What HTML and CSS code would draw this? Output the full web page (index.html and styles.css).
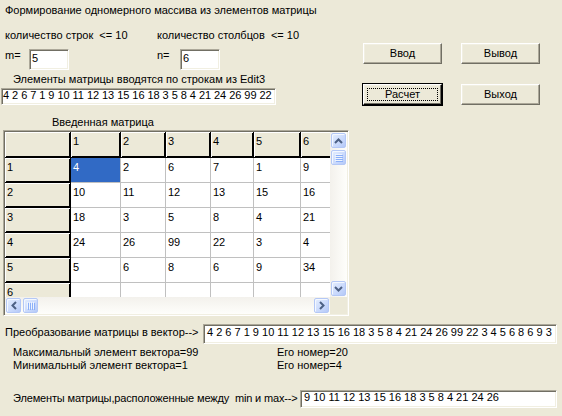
FILE: index.html
```html
<!DOCTYPE html>
<html>
<head>
<meta charset="utf-8">
<link rel="stylesheet" href="styles.css">
</head>
<body>
<div class="form">
  <div class="top">
    <div class="left">
      <div class="title">Формирование одномерного массива из элементов матрицы</div>
      <div class="limits"><span class="lim-m">количество строк  &lt;= 10</span><span>количество столбцов  &lt;= 10</span></div>
      <div class="mn">
        <span class="lbl">m=</span><div class="edit e-small">5</div>
        <span class="lbl lbl-n">n=</span><div class="edit e-small">6</div>
      </div>
      <div class="hint">Элементы матрицы вводятся по строкам из Edit3</div>
      <div class="edit edit3">4 2 6 7 1 9 10 11 12 13 15 16 18 3 5 8 4 21 24 26 99 22</div>
    </div>
    <div class="buttons">
      <div class="btn">Ввод</div>
      <div class="btn">Вывод</div>
      <div class="btn btn-default"><span class="focus">Расчет</span></div>
      <div class="btn">Выход</div>
    </div>
  </div>

  <div class="grid-label">Введенная матрица</div>
  <div class="sg">
    <div class="sg-body">
      <div class="sg-cells">
        <div class="c fx"></div><div class="c fx">1</div><div class="c fx">2</div><div class="c fx">3</div><div class="c fx">4</div><div class="c fx">5</div><div class="c fx">6</div>
        <div class="c fx">1</div><div class="c sel">4</div><div class="c">2</div><div class="c">6</div><div class="c">7</div><div class="c">1</div><div class="c">9</div>
        <div class="c fx">2</div><div class="c">10</div><div class="c">11</div><div class="c">12</div><div class="c">13</div><div class="c">15</div><div class="c">16</div>
        <div class="c fx">3</div><div class="c">18</div><div class="c">3</div><div class="c">5</div><div class="c">8</div><div class="c">4</div><div class="c">21</div>
        <div class="c fx">4</div><div class="c">24</div><div class="c">26</div><div class="c">99</div><div class="c">22</div><div class="c">3</div><div class="c">4</div>
        <div class="c fx">5</div><div class="c">5</div><div class="c">6</div><div class="c">8</div><div class="c">6</div><div class="c">9</div><div class="c">34</div>
        <div class="c fx">6</div><div class="c"></div><div class="c"></div><div class="c"></div><div class="c"></div><div class="c"></div><div class="c"></div>
      </div>
      <div class="vscroll">
        <div class="sbtn"><div class="sbtn-in"><svg width="9" height="6" viewBox="0 0 9 6"><path d="M1 5 L4.5 1.5 L8 5" fill="none" stroke="#4d6185" stroke-width="2"/></svg></div></div>
        <div class="sbtn thumb"><div class="sbtn-in"><svg width="8" height="8" viewBox="0 0 8 8"><path d="M0 0.5H7M0 2.5H7M0 4.5H7M0 6.5H7" stroke="#eef4fe"/><path d="M1 1.5H8M1 3.5H8M1 5.5H8M1 7.5H8" stroke="#8cb0f8"/></svg></div></div>
        <div class="vtrack"></div>
        <div class="sbtn"><div class="sbtn-in"><svg width="9" height="6" viewBox="0 0 9 6"><path d="M1 1 L4.5 4.5 L8 1" fill="none" stroke="#4d6185" stroke-width="2"/></svg></div></div>
      </div>
    </div>
    <div class="sg-foot">
      <div class="hscroll">
        <div class="sbtn"><div class="sbtn-in"><svg width="6" height="9" viewBox="0 0 6 9"><path d="M5 1 L1.5 4.5 L5 8" fill="none" stroke="#4d6185" stroke-width="2"/></svg></div></div>
        <div class="sbtn thumb"><div class="sbtn-in"><svg width="8" height="8" viewBox="0 0 8 8"><path d="M0.5 0V7M2.5 0V7M4.5 0V7M6.5 0V7" stroke="#eef4fe"/><path d="M1.5 1V8M3.5 1V8M5.5 1V8M7.5 1V8" stroke="#8cb0f8"/></svg></div></div>
        <div class="htrack"></div>
        <div class="sbtn"><div class="sbtn-in"><svg width="6" height="9" viewBox="0 0 6 9"><path d="M1 1 L4.5 4.5 L1 8" fill="none" stroke="#4d6185" stroke-width="2"/></svg></div></div>
      </div>
      <div class="corner"></div>
    </div>
  </div>

  <div class="vec-row">
    <span class="vec-label">Преобразование матрицы в вектор--&gt;</span>
    <div class="edit edit-vec">4 2 6 7 1 9 10 11 12 13 15 16 18 3 5 8 4 21 24 26 99 22 3 4 5 6 8 6 9 3</div>
  </div>
  <div class="info-row first"><span class="info-l">Максимальный элемент вектора=99</span><span>Его номер=20</span></div>
  <div class="info-row"><span class="info-l">Минимальный элемент вектора=1</span><span>Его номер=4</span></div>
  <div class="mm-row">
    <span class="mm-label">Элементы матрицы,расположенные между  min и max--&gt;</span>
    <div class="edit edit-mm">9 10 11 12 13 15 16 18 3 5 8 4 21 24 26</div>
  </div>
</div>
</body>
</html>
```

FILE: styles.css
```css
html, body {
  margin: 0;
  padding: 0;
}
body {
  width: 562px;
  height: 416px;
  overflow: hidden;
  background: #ece9d8;
  font-family: "Liberation Sans", Arial, sans-serif;
  font-size: 11px;
  line-height: 13px;
  color: #000;
}
.form {
  display: flex;
  flex-direction: column;
}
.top {
  display: flex;
}
.left {
  width: 358px;
  display: flex;
  flex-direction: column;
}
.title {
  margin: 4px 0 0 5px;
  white-space: pre;
}
.limits {
  margin: 12px 0 0 5px;
  display: flex;
  white-space: pre;
}
.lim-m {
  width: 152px;
}
.mn {
  margin: 7px 0 0 5px;
  display: flex;
  align-items: flex-start;
}
.lbl {
  width: 24px;
}
.lbl-n {
  margin-left: 88px;
  width: 23px;
}
.edit {
  box-sizing: border-box;
  background: #fff;
  border: 1px solid;
  border-color: #aca899 #fff #fff #aca899;
  box-shadow: inset 1px 1px 0 #716f64, inset -1px -1px 0 #f1efe2;
  white-space: pre;
  overflow: hidden;
}
.e-small {
  width: 40px;
  height: 21px;
  padding: 2px 0 0 2px;
}
.hint {
  margin: 3px 0 0 13px;
}
.edit3 {
  margin: 2px 0 0 1px;
  width: 275px;
  height: 17px;
  padding: 0 0 0 1px;
  letter-spacing: -0.05px;
}
.buttons {
  margin: 43px 0 0 5px;
  display: grid;
  grid-template-columns: 79px 79px;
  grid-template-rows: 21px 21px;
  column-gap: 19px;
  row-gap: 20px;
  align-self: flex-start;
}
.btn {
  box-sizing: border-box;
  border: 1px solid;
  border-color: #fff #716f64 #716f64 #fff;
  box-shadow: inset -1px -1px 0 #aca899, inset 1px 1px 0 #f1efe2;
  background: #ece9d8;
  display: flex;
  align-items: center;
  justify-content: center;
}
.btn-default {
  outline: 1px solid #000;
  outline-offset: 0;
  border-color: #fff #000 #000 #fff;
  box-shadow: inset -1px -1px 0 #716f64, inset 1px 1px 0 #f1efe2;
  padding: 3px;
}
.focus {
  flex: 1;
  align-self: stretch;
  display: flex;
  align-items: center;
  justify-content: center;
  border: 1px dotted #000;
}
.grid-label {
  margin: 11px 0 0 52px;
}
.sg {
  margin: 1px 0 0 3px;
  width: 346px;
  height: 186px;
  box-sizing: border-box;
  border: 1px solid;
  border-color: #aca899 #fff #fff #aca899;
  box-shadow: inset 1px 1px 0 #716f64, inset -1px -1px 0 #f1efe2;
  padding: 1px;
  display: flex;
  flex-direction: column;
}
.sg-body {
  display: flex;
  height: 165px;
}
.sg-cells {
  width: 325px;
  height: 165px;
  overflow: hidden;
  display: grid;
  grid-template-columns: 66px 50px 45px 45px 43px 47px 50px;
  grid-template-rows: 26px 25px 25px 25px 25px 25px 25px;
  background: #fff;
}
.c {
  box-sizing: border-box;
  border-right: 1px solid #c0c0c0;
  border-bottom: 1px solid #c0c0c0;
  padding: 3px 0 0 2px;
  background: #fff;
  white-space: pre;
}
.c.fx {
  background: #ece9d8;
  border-right-color: #000;
  border-bottom-color: #000;
  box-shadow: inset 1px 1px 0 #fff, inset -1px -1px 0 #000;
}
.c.sel {
  background: #316ac5;
  color: #fff;
}
.vscroll {
  width: 17px;
  height: 165px;
  display: flex;
  flex-direction: column;
  background: linear-gradient(to right, #f3f1ec, #fefefb);
}
.vtrack {
  flex: 1;
}
.sbtn {
  width: 17px;
  height: 17px;
  box-sizing: border-box;
  padding: 1px;
  flex: none;
}
.sbtn-in {
  width: 100%;
  height: 100%;
  box-sizing: border-box;
  border: 1px solid #b4c8f6;
  border-radius: 2px;
  background: linear-gradient(135deg, #e5eefe 0%, #c9d9fc 60%, #b5c9f7 100%);
  box-shadow: inset 1px 1px 0 #f4f8ff;
  display: flex;
  align-items: center;
  justify-content: center;
}
.sg-foot {
  display: flex;
  height: 17px;
}
.hscroll {
  width: 325px;
  height: 17px;
  display: flex;
  background: linear-gradient(to bottom, #f3f1ec, #fefefb);
}
.htrack {
  flex: 1;
}
.corner {
  width: 17px;
  height: 17px;
  background: #ece9d8;
}
.vec-row {
  margin: 8px 0 0 5px;
  display: flex;
  align-items: flex-start;
}
.vec-label {
  width: 198px;
  margin-top: 2px;
  white-space: pre;
}
.edit-vec {
  width: 354px;
  height: 20px;
  padding: 1px 0 0 3px;
}
.info-row {
  margin-left: 13px;
  display: flex;
  white-space: pre;
}
.info-row.first {
  margin-top: 2px;
}
.info-l {
  width: 264px;
}
.mm-row {
  margin: 18px 0 0 13px;
  display: flex;
  align-items: flex-start;
}
.mm-label {
  width: 287px;
  margin-top: 2px;
  white-space: pre;
  letter-spacing: -0.15px;
}
.edit-mm {
  width: 257px;
  height: 18px;
  padding: 0 0 0 3px;
}
```
